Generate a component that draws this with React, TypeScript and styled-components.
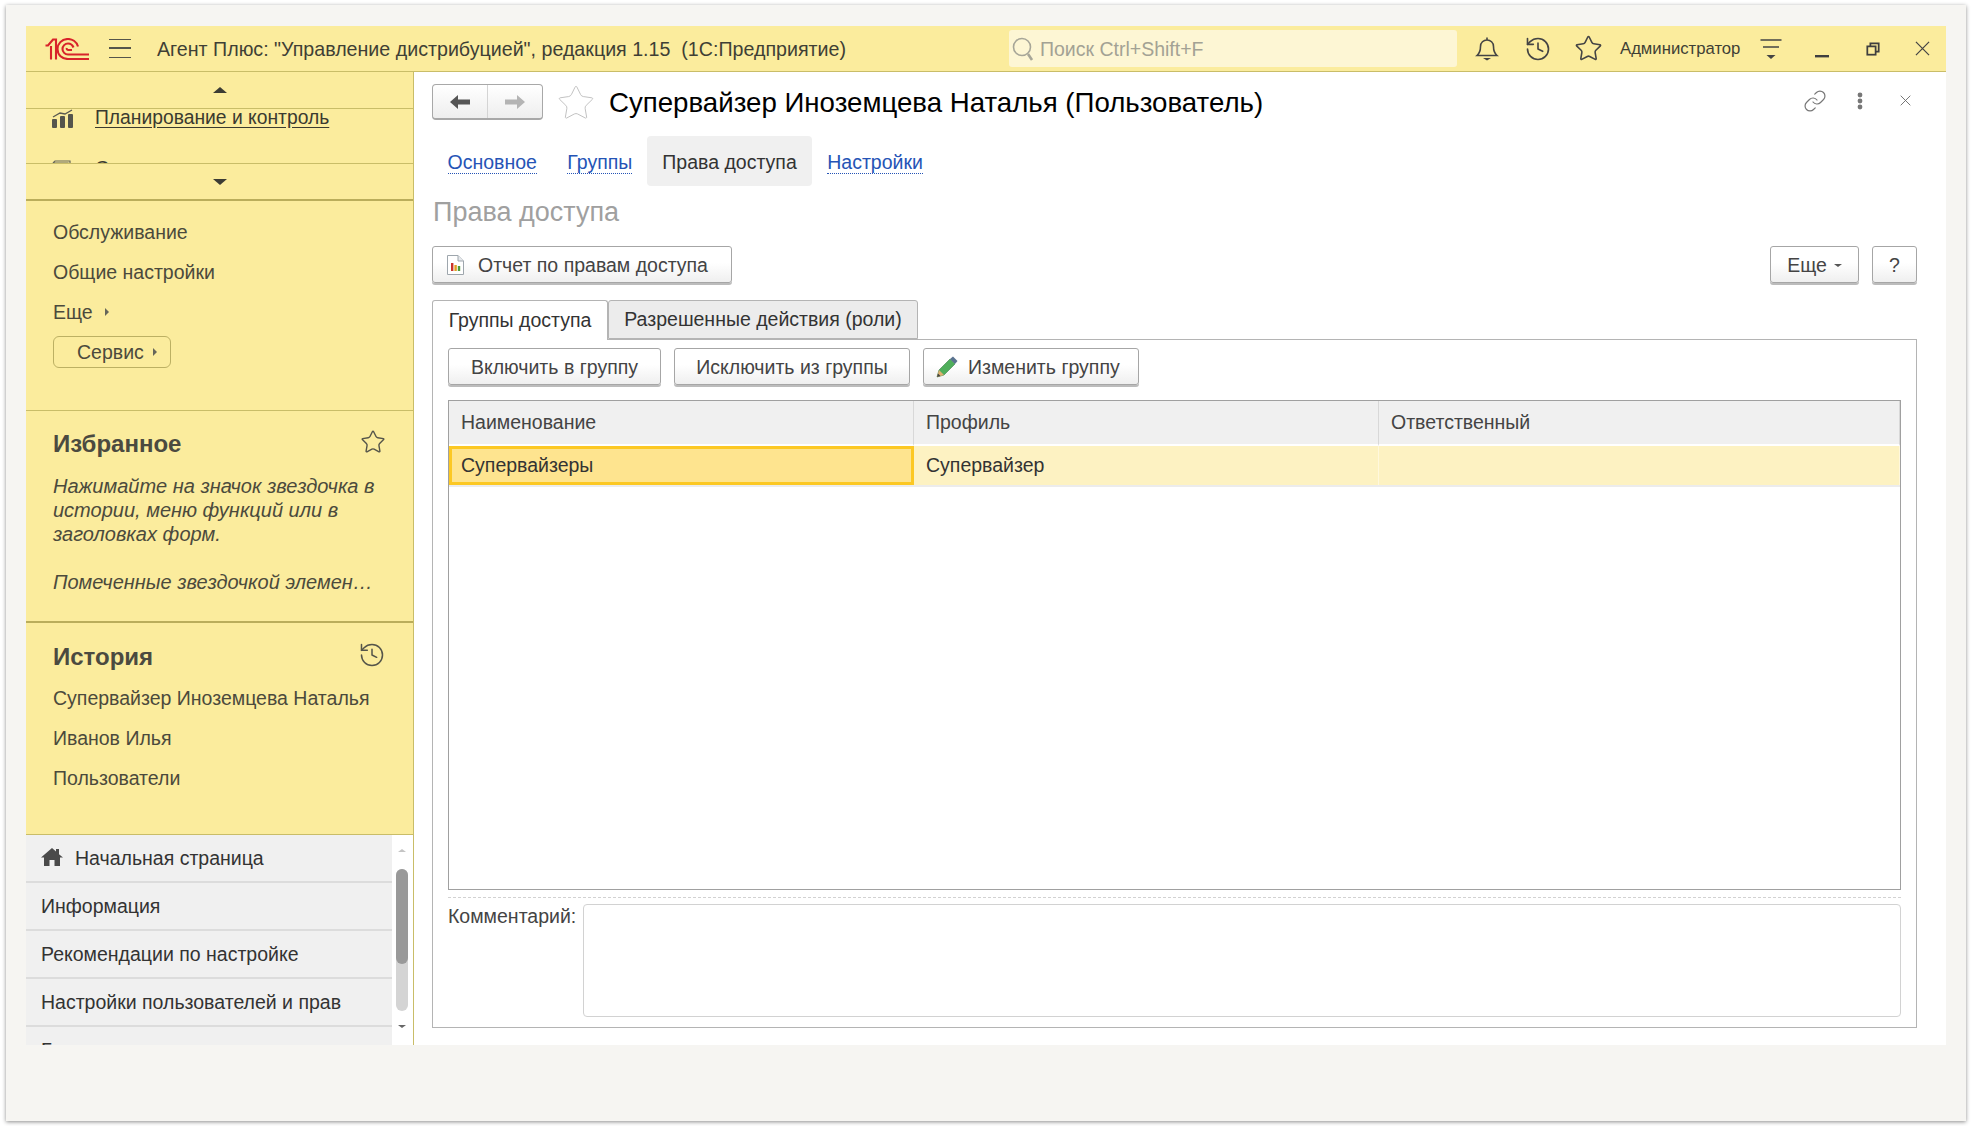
import styled, { createGlobalStyle } from 'styled-components';
import { History, Link, Star } from 'lucide-react';

const GlobalStyle = createGlobalStyle`
  html, body {
    margin: 0;
    padding: 0;
    background: #fff;
    font-family: "Liberation Sans", Arial, sans-serif;
    font-size: 19.5px;
  }
  * {
    box-sizing: border-box;
  }
`;

const Page = styled.div`
  width: 1972px;
  height: 1126px;
  padding: 5px 6px;
  overflow: hidden;
`;

const Paper = styled.div`
  width: 1960px;
  height: 1116px;
  padding: 21px 20px 0;
  background: #f6f5f2;
  box-shadow: 0 1px 4px rgba(0, 0, 0, 0.45);
`;

const Window = styled.div`
  width: 1920px;
  height: 1019px;
  display: flex;
  flex-direction: column;
  overflow: hidden;
  background: #fff;
`;

const Header = styled.header`
  height: 46px;
  flex: none;
  display: flex;
  align-items: center;
  padding-left: 19px;
  background: #fbec9d;
  border-bottom: 1px solid #c9bd68;
  color: #3f3f35;
`;

const Hamburger = styled.div`
  width: 22px;
  height: 19px;
  margin: 0 26px 0 20px;
  border-top: 1.5px solid #55554a;
  border-bottom: 1.5px solid #55554a;
  position: relative;

  &::after {
    content: '';
    position: absolute;
    left: 0;
    right: 0;
    top: 7px;
    height: 1.5px;
    background: #55554a;
  }
`;

const AppTitle = styled.div`
  flex: 1;
  padding-top: 1px;
  font-size: 19.65px;
  white-space: nowrap;
`;

const Search = styled.div`
  width: 448px;
  height: 37px;
  margin-right: 4px;
  padding: 1px 0 0 3px;
  display: flex;
  align-items: center;
  gap: 4px;
  background: #fdf6d4;
  border-radius: 3px;
  color: #a3a294;
`;

const IconSlot = styled.div<{ $w?: number }>`
  width: ${({ $w }) => $w ?? 51}px;
  height: 45px;
  flex: none;
  display: flex;
  align-items: center;
  justify-content: center;
`;

const UserName = styled.div`
  width: 125px;
  margin-left: 6px;
  font-size: 16.7px;
  white-space: nowrap;
`;

const Body = styled.div`
  flex: 1;
  min-height: 0;
  display: flex;
`;

const Sidebar = styled.aside`
  width: 388px;
  flex: none;
  display: flex;
  flex-direction: column;
  background: #fbec9d;
  border-right: 1px solid #c9bd68;
  color: #4b4a3c;
`;

const ScrollerUp = styled.div`
  height: 37px;
  flex: none;
  display: flex;
  align-items: center;
  justify-content: center;
  border-bottom: 1px solid #c9bd68;
`;

const ScrollerDown = styled(ScrollerUp)`
  height: 36px;
  border-top: 1px solid #c9bd68;
  border-bottom: none;
`;

const Triangle = styled.span<{ $dir: 'up' | 'down' | 'right'; $size: number; $color: string }>`
  display: inline-block;
  width: 0;
  height: 0;
  flex: none;
  ${({ $dir, $size, $color }) =>
    $dir === 'right'
      ? `border-left: ${$size}px solid ${$color}; border-top: ${$size}px solid transparent; border-bottom: ${$size}px solid transparent;`
      : `border-left: ${$size + 2}px solid transparent; border-right: ${$size + 2}px solid transparent; border-${$dir === 'up' ? 'bottom' : 'top'}: ${$size + 1}px solid ${$color};`}
`;

const MoreCaret = styled(Triangle)`
  margin-left: -7px;
`;

const MenuViewport = styled.div`
  height: 54px;
  flex: none;
  overflow: hidden;
`;

const MenuRow = styled.div`
  height: 51px;
  display: flex;
  padding-left: 26px;
  gap: 21px;
  align-items: flex-start;
  line-height: 17px;
`;

const MenuLink = styled.span<{ $active?: boolean }>`
  color: #3a3a30;
  font-size: 19.3px;
  text-decoration: ${({ $active }) => ($active ? 'underline' : 'none')};
  text-underline-offset: 3px;
`;

const Section = styled.section<{ $h: number; $line: number }>`
  height: ${({ $h }) => $h}px;
  flex: none;
  padding-left: 27px;
  border-bottom: ${({ $line }) => $line}px solid ${({ $line }) => ($line > 1 ? '#baad5b' : '#c9bd68')};
  overflow: hidden;
`;

const FunctionsSection = styled(Section)`
  border-top: 2px solid #baad5b;
  padding-top: 11px;
`;

const SideLink = styled.div`
  height: 40px;
  display: flex;
  align-items: center;
  gap: 12px;
  white-space: nowrap;
`;

const ServiceButton = styled.div`
  width: 118px;
  height: 32px;
  margin-top: 4px;
  padding-left: 23px;
  display: flex;
  align-items: center;
  gap: 9px;
  border: 1px solid #bcb063;
  border-radius: 6px;
`;

const SectionHead = styled.div<{ $mt: number }>`
  height: 34px;
  margin-top: ${({ $mt }) => $mt}px;
  display: flex;
  align-items: center;
  justify-content: space-between;
  padding-right: 27px;
`;

const HeadIcon = styled.span`
  display: flex;
  margin-bottom: 4px;
  color: #55554a;
`;

const SectionTitle = styled.h3`
  margin: 0;
  font-size: 24px;
  font-weight: 700;
  color: #4b4a40;
`;

const Hint = styled.p<{ $mt: number }>`
  margin: ${({ $mt }) => $mt}px 0 0;
  width: 340px;
  font-size: 20px;
  font-style: italic;
  line-height: 24px;
  white-space: nowrap;
`;

const HistoryList = styled.div`
  margin-top: 4px;
`;

const BottomList = styled.div`
  flex: 1;
  min-height: 0;
  display: flex;
  background: #fff;
  overflow: hidden;
`;

const Pages = styled.div`
  width: 366px;
  flex: none;
  background: #f0f0f0;
  overflow: hidden;
`;

const PageRow = styled.div`
  height: 48px;
  padding-left: 15px;
  display: flex;
  align-items: center;
  gap: 12px;
  border-bottom: 2px solid #dcdcdc;
  color: #333;
  white-space: nowrap;
`;

const HomeSvg = styled.svg`
  margin-bottom: 3px;
`;

const ScrollBar = styled.div`
  flex: 1;
  display: flex;
  flex-direction: column;
  align-items: center;
  padding: 14px 2px 0 0;
`;

const ScrollTrack = styled.div`
  width: 12px;
  height: 142px;
  margin-top: 17px;
  border-radius: 6px;
  background: #d4d4d4;
`;

const ScrollThumb = styled.div`
  height: 95px;
  border-radius: 6px;
  background: #999;
`;

const ScrollArrowDown = styled.div`
  display: flex;
  margin-top: 14px;
`;

const Main = styled.main`
  flex: 1;
  min-width: 0;
  padding: 12px 29px 0 18px;
  display: flex;
  flex-direction: column;
  background: #fff;
`;

const TitleRow = styled.div`
  height: 36px;
  flex: none;
  display: flex;
  align-items: center;
`;

const NavGroup = styled.div`
  width: 111px;
  height: 36px;
  flex: none;
  display: flex;
  background: linear-gradient(#fff, #eee);
  border: 1px solid #a8a8a8;
  border-bottom-width: 2px;
  border-radius: 4px;
`;

const NavButton = styled.div<{ $divider?: boolean }>`
  flex: 1;
  display: flex;
  align-items: center;
  justify-content: center;
  ${({ $divider }) => ($divider ? 'border-right: 1px solid #d4d4d4;' : '')}
`;

const ArrowSvg = styled.svg<{ $flip?: boolean }>`
  ${({ $flip }) => ($flip ? 'transform: scaleX(-1);' : '')}
`;

const FormStar = styled(Star)`
  flex: none;
  margin: 2px 0 0 13px;
`;

const FormTitle = styled.h1`
  flex: 1;
  margin: 0 0 0 13px;
  padding-top: 2px;
  font-size: 27.65px;
  font-weight: 400;
  color: #000;
  white-space: nowrap;
`;

const FormActions = styled.div`
  display: flex;
  align-items: center;
  gap: 21px;
  margin-bottom: 3px;
`;

const ActionIcon = styled.div`
  width: 24px;
  height: 24px;
  display: flex;
  align-items: center;
  justify-content: center;
  color: #777;
`;

const PageTabs = styled.nav`
  margin-top: 16px;
  height: 50px;
  flex: none;
  display: flex;
`;

const PageTab = styled.div<{ $active?: boolean }>`
  padding: 3px 15px 0 ${({ $active }) => ($active ? 15 : 15.5)}px;
  display: flex;
  align-items: center;
  border-radius: 4px;
  background: ${({ $active }) => ($active ? '#f0f0f0' : 'transparent')};
  color: #333;
`;

const HyperLink = styled.span`
  color: #2554b6;
  border-bottom: 1px dotted #2554b6;
  line-height: 21px;
`;

const PageHeading = styled.h2`
  margin: 4px 0 0 1px;
  height: 44px;
  flex: none;
  font-size: 27px;
  font-weight: 400;
  line-height: 44px;
  color: #a0a0a0;
`;

const Toolbar = styled.div<{ $mt: number }>`
  margin-top: ${({ $mt }) => $mt}px;
  flex: none;
  display: flex;
  gap: 13px;
`;

const Spacer = styled.div`
  flex: 1;
`;

const Button = styled.button<{ $w: number; $pad?: number; $gap?: number }>`
  width: ${({ $w }) => $w}px;
  height: 37px;
  padding: 1px 0 0 ${({ $pad }) => $pad ?? 0}px;
  display: flex;
  align-items: center;
  justify-content: ${({ $pad }) => ($pad ? 'flex-start' : 'center')};
  gap: ${({ $gap }) => $gap ?? 14}px;
  font: inherit;
  color: #444;
  background: linear-gradient(#fff, #fff 45%, #efefef);
  border: 1px solid #a6a6a6;
  border-radius: 3px;
  box-shadow: 0 2px 0 #bcbcbc;
`;

const TabStrip = styled.div`
  margin-top: 17px;
  height: 39px;
  flex: none;
  display: flex;
`;

const Tab = styled.div<{ $w: number; $active?: boolean }>`
  width: ${({ $w }) => $w}px;
  height: ${({ $active }) => ($active ? 40 : 39)}px;
  position: relative;
  z-index: 1;
  display: flex;
  align-items: center;
  justify-content: center;
  background: ${({ $active }) => ($active ? '#fff' : '#ececec')};
  border: 1px solid #b4b4b4;
  border-bottom: ${({ $active }) => ($active ? 'none' : '1px solid #b4b4b4')};
  border-radius: 3px 3px 0 0;
  color: #333;
`;

const TabPanel = styled.div`
  height: 689px;
  flex: none;
  padding: 8px 15px 10px;
  display: flex;
  flex-direction: column;
  border: 1px solid #b4b4b4;
`;

const Table = styled.div`
  margin-top: 15px;
  height: 490px;
  flex: none;
  border: 1px solid #a0a0a0;
`;

const TableGrid = styled.div<{ $h: number }>`
  height: ${({ $h }) => $h}px;
  display: grid;
  grid-template-columns: 465px 465px 1fr;
`;

const HeadCell = styled.div`
  display: flex;
  align-items: center;
  padding: 0 0 1px 12px;
  background: #f0f0f0;
  border-right: 1px solid #d8d8d8;
  border-bottom: 2px solid #fff;
  color: #444;
`;

const RowCell = styled.div<{ $current?: boolean }>`
  display: flex;
  align-items: center;
  padding: 0 0 1px ${({ $current }) => ($current ? 9 : 12)}px;
  background: ${({ $current }) => ($current ? '#fee48f' : '#fdf2c2')};
  border: ${({ $current }) => ($current ? '3px solid #fcc823' : 'none')};
  border-right: ${({ $current }) => ($current ? '3px solid #fcc823' : '1px solid #fff8dc')};
  color: #333;
`;

const RowLine = styled.div`
  height: 2px;
  background: #ececec;
`;

const Dashed = styled.div`
  margin-top: 7px;
  flex: none;
  border-top: 1px dashed #d2d2d2;
`;

const CommentRow = styled.div`
  margin-top: 6px;
  flex: 1;
  display: flex;
`;

const CommentLabel = styled.label`
  width: 135px;
  flex: none;
  padding-top: 1px;
  color: #444;
  line-height: 22px;
  white-space: nowrap;
`;

const CommentBox = styled.textarea`
  flex: 1;
  margin: 0;
  border: 1px solid #d2d2d2;
  border-radius: 4px;
  resize: none;
  background: #fff;
`;

const Logo = () => (
  <svg width="44" height="22" viewBox="0 0 44 22" fill="none" stroke="#d8232a" strokeWidth="2.1">
    <path d="M0.5 7.5 L3 7.5 L8 1.5 L11 1.5 L11 21.5" />
    <path d="M6 8 L6 21.5" />
    <path d="M33 8.5 C31.5 3.5 27 1 23 1 C16.5 1 12.5 6 12.5 11 C12.5 17 17 21 23 21 L44 21" />
    <path d="M28.5 9.5 C27.5 7 25.5 5.5 23 5.5 C20 5.5 17.5 8 17.5 11 C17.5 14 20 16.5 23 16.5 L44 16.5" />
    <path d="M27 12 L23.5 12 C22 12 21.5 11 21.8 10" />
  </svg>
);

const Bell = () => (
  <svg width="24" height="24" viewBox="0 0 24 24" fill="none" stroke="#444" strokeWidth="1.6">
    <path d="M12 0.5 V3 M2 18.5 C5 16 5.5 13 5.5 9.5 C5.5 5.5 8.5 3 12 3 C15.5 3 18.5 5.5 18.5 9.5 C18.5 13 19 16 22 18.5 Z" />
    <path d="M8 21 H16 L12 23.5 Z" fill="#444" stroke="none" />
  </svg>
);

const MenuLines = () => (
  <svg width="24" height="24" viewBox="0 0 24 24" stroke="#444" strokeWidth="1.6">
    <path d="M1.5 3 H22.5 M4 10 H20" />
    <path d="M7.5 18 H16.5 L12 22 Z" fill="#444" stroke="none" />
  </svg>
);

const Minimize = () => (
  <svg width="16" height="24" viewBox="0 0 16 24">
    <rect x="1" y="18" width="14" height="2.4" fill="#3f3f3f" />
  </svg>
);

const Restore = () => (
  <svg width="14" height="14" viewBox="0 0 16 16" fill="none" stroke="#3f3f3f" strokeWidth="2">
    <rect x="1.5" y="5" width="9.5" height="9.5" />
    <path d="M5 5 V1.5 H14.5 V11 H11" />
  </svg>
);

const Cross = ({ size, color }: { size: number; color: string }) => (
  <svg width={size} height={size} viewBox="0 0 16 16" stroke={color} strokeWidth="1.3">
    <path d="M1 1 L15 15 M15 1 L1 15" />
  </svg>
);

const Magnifier = () => (
  <svg width="24" height="26" viewBox="0 0 24 26" fill="none" stroke="#a7a698" strokeWidth="1.6">
    <circle cx="10" cy="11" r="8.5" />
    <path d="M16 18 L20 24" strokeWidth="2.6" />
  </svg>
);

const Arrow = ({ color, flip }: { color: string; flip?: boolean }) => (
  <ArrowSvg $flip={flip} width="20" height="16" viewBox="0 0 20 16">
    <path d="M0 8 L8 1 V5.5 H20 V10.5 H8 V15 Z" fill={color} />
  </ArrowSvg>
);

const ChartBars = () => (
  <svg width="22" height="19" viewBox="0 0 22 19">
    <path d="M1 8 L8 4 L13 5 L20 1" fill="none" stroke="#5a5a50" strokeWidth="1.3" />
    <rect x="0" y="10" width="5" height="9" rx="1" fill="#55554c" />
    <rect x="8" y="7" width="5" height="12" rx="1" fill="#55554c" />
    <rect x="16" y="5" width="5" height="14" rx="1" fill="#55554c" />
  </svg>
);

const BooksIcon = () => (
  <svg width="22" height="12" viewBox="0 0 22 12" fill="none" stroke="#66665a" strokeWidth="1.2">
    <path d="M1 3 L3 1 H18 V12 M1 3 H16 V12" />
  </svg>
);

const Home = () => (
  <HomeSvg width="22" height="18" viewBox="0 0 22 18" fill="#4a4a4a">
    <path d="M11 0 L15 3.6 V1 H18 V6.3 L22 9.5 H19 V18 H13.5 V12 H8.5 V18 H3 V9.5 H0 Z" />
  </HomeSvg>
);

const ReportIcon = () => (
  <svg width="17" height="20" viewBox="0 0 17 20">
    <path d="M0.5 0.5 H11 L16.5 6 V19.5 H0.5 Z" fill="#fff" stroke="#9ea6ad" />
    <path d="M11 0.5 V6 H16.5" fill="#e6e9ec" stroke="#9ea6ad" />
    <rect x="4" y="8" width="2.4" height="8" fill="#c9332b" />
    <rect x="7.4" y="10" width="2.4" height="6" fill="#e0a020" />
    <rect x="10.8" y="11" width="2.4" height="5" fill="#4f9a3a" />
  </svg>
);

const Pencil = () => (
  <svg width="22" height="22" viewBox="0 0 22 22">
    <path d="M1 21 L3 14 L14 3 L19 8 L8 19 Z" fill="#4fae5b" stroke="#3d7f49" strokeWidth="0.6" />
    <path d="M14 3 L17 0.5 L21.5 5 L19 8 Z" fill="#5a7390" />
    <path d="M1 21 L3 14 L8 19 Z" fill="#e0b070" />
    <path d="M1 21 L2 17.5 L4.5 20 Z" fill="#444" />
  </svg>
);

const App = () => (
  <>
    <GlobalStyle />
    <Page>
      <Paper>
        <Window>
          <Header>
            <Logo />
            <Hamburger />
            <AppTitle>Агент Плюс: "Управление дистрибуцией", редакция 1.15 &nbsp;(1С:Предприятие)</AppTitle>
            <Search>
              <Magnifier />
              Поиск Ctrl+Shift+F
            </Search>
            <IconSlot><Bell /></IconSlot>
            <IconSlot><History size={28} strokeWidth={1.4} color="#444" /></IconSlot>
            <IconSlot><Star size={29} strokeWidth={1.3} color="#444" /></IconSlot>
            <UserName>Администратор</UserName>
            <IconSlot><MenuLines /></IconSlot>
            <IconSlot><Minimize /></IconSlot>
            <IconSlot><Restore /></IconSlot>
            <IconSlot $w={48}><Cross size={15} color="#444" /></IconSlot>
          </Header>
          <Body>
            <Sidebar>
              <ScrollerUp>
                <Triangle $dir="up" $size={5} $color="#3c3c34" />
              </ScrollerUp>
              <MenuViewport>
                <MenuRow>
                  <ChartBars />
                  <MenuLink $active>Планирование и контроль</MenuLink>
                </MenuRow>
                <MenuRow>
                  <BooksIcon />
                  <MenuLink>Справочники</MenuLink>
                </MenuRow>
              </MenuViewport>
              <ScrollerDown>
                <Triangle $dir="down" $size={5} $color="#3c3c34" />
              </ScrollerDown>
              <FunctionsSection $h={212} $line={1}>
                <SideLink>Обслуживание</SideLink>
                <SideLink>Общие настройки</SideLink>
                <SideLink>
                  Еще
                  <Triangle $dir="right" $size={4} $color="#66665a" />
                </SideLink>
                <ServiceButton>
                  Сервис
                  <Triangle $dir="right" $size={4} $color="#66665a" />
                </ServiceButton>
              </FunctionsSection>
              <Section $h={212} $line={2}>
                <SectionHead $mt={16}>
                  <SectionTitle>Избранное</SectionTitle>
                  <HeadIcon><Star size={26} strokeWidth={1.3} /></HeadIcon>
                </SectionHead>
                <Hint $mt={13}>
                  Нажимайте на значок звездочка в<br />
                  истории, меню функций или в<br />
                  заголовках форм.
                </Hint>
                <Hint $mt={24}>Помеченные звездочкой элемен…</Hint>
              </Section>
              <Section $h={212} $line={1}>
                <SectionHead $mt={17}>
                  <SectionTitle>История</SectionTitle>
                  <HeadIcon><History size={28} strokeWidth={1.3} /></HeadIcon>
                </SectionHead>
                <HistoryList>
                  <SideLink>Супервайзер Иноземцева Наталья</SideLink>
                  <SideLink>Иванов Илья</SideLink>
                  <SideLink>Пользователи</SideLink>
                </HistoryList>
              </Section>
              <BottomList>
                <Pages>
                  <PageRow>
                    <Home />
                    Начальная страница
                  </PageRow>
                  <PageRow>Информация</PageRow>
                  <PageRow>Рекомендации по настройке</PageRow>
                  <PageRow>Настройки пользователей и прав</PageRow>
                  <PageRow>Группы</PageRow>
                </Pages>
                <ScrollBar>
                  <Triangle $dir="up" $size={2} $color="#c4c4c4" />
                  <ScrollTrack>
                    <ScrollThumb />
                  </ScrollTrack>
                  <ScrollArrowDown>
                    <Triangle $dir="down" $size={2} $color="#666" />
                  </ScrollArrowDown>
                </ScrollBar>
              </BottomList>
            </Sidebar>
            <Main>
              <TitleRow>
                <NavGroup>
                  <NavButton $divider><Arrow color="#555" /></NavButton>
                  <NavButton><Arrow color="#b4b4b4" flip /></NavButton>
                </NavGroup>
                <FormStar size={40} strokeWidth={0.55} color="#bcbcbc" />
                <FormTitle>Супервайзер Иноземцева Наталья (Пользователь)</FormTitle>
                <FormActions>
                  <ActionIcon><Link size={26} strokeWidth={1.2} /></ActionIcon>
                  <ActionIcon>
                    <svg width="6" height="18" viewBox="0 0 6 18" fill="#777">
                      <circle cx="3" cy="3" r="2.4" />
                      <circle cx="3" cy="9" r="2.4" />
                      <circle cx="3" cy="15" r="2.4" />
                    </svg>
                  </ActionIcon>
                  <ActionIcon><Cross size={11} color="#666" /></ActionIcon>
                </FormActions>
              </TitleRow>
              <PageTabs>
                <PageTab><HyperLink>Основное</HyperLink></PageTab>
                <PageTab><HyperLink>Группы</HyperLink></PageTab>
                <PageTab $active>Права доступа</PageTab>
                <PageTab><HyperLink>Настройки</HyperLink></PageTab>
              </PageTabs>
              <PageHeading>Права доступа</PageHeading>
              <Toolbar $mt={12}>
                <Button $w={300} $pad={14}>
                  <ReportIcon />
                  Отчет по правам доступа
                </Button>
                <Spacer />
                <Button $w={89}>
                  Еще
                  <MoreCaret $dir="down" $size={2} $color="#555" />
                </Button>
                <Button $w={45}>?</Button>
              </Toolbar>
              <TabStrip>
                <Tab $w={176} $active>Группы доступа</Tab>
                <Tab $w={310}>Разрешенные действия (роли)</Tab>
              </TabStrip>
              <TabPanel>
                <Toolbar $mt={0}>
                  <Button $w={213}>Включить в группу</Button>
                  <Button $w={236}>Исключить из группы</Button>
                  <Button $w={216} $pad={12} $gap={10}>
                    <Pencil />
                    Изменить группу
                  </Button>
                </Toolbar>
                <Table>
                  <TableGrid $h={45}>
                    <HeadCell>Наименование</HeadCell>
                    <HeadCell>Профиль</HeadCell>
                    <HeadCell>Ответственный</HeadCell>
                  </TableGrid>
                  <TableGrid $h={39}>
                    <RowCell $current>Супервайзеры</RowCell>
                    <RowCell>Супервайзер</RowCell>
                    <RowCell />
                  </TableGrid>
                  <RowLine />
                </Table>
                <Dashed />
                <CommentRow>
                  <CommentLabel>Комментарий:</CommentLabel>
                  <CommentBox />
                </CommentRow>
              </TabPanel>
            </Main>
          </Body>
        </Window>
      </Paper>
    </Page>
  </>
);

export default App;
